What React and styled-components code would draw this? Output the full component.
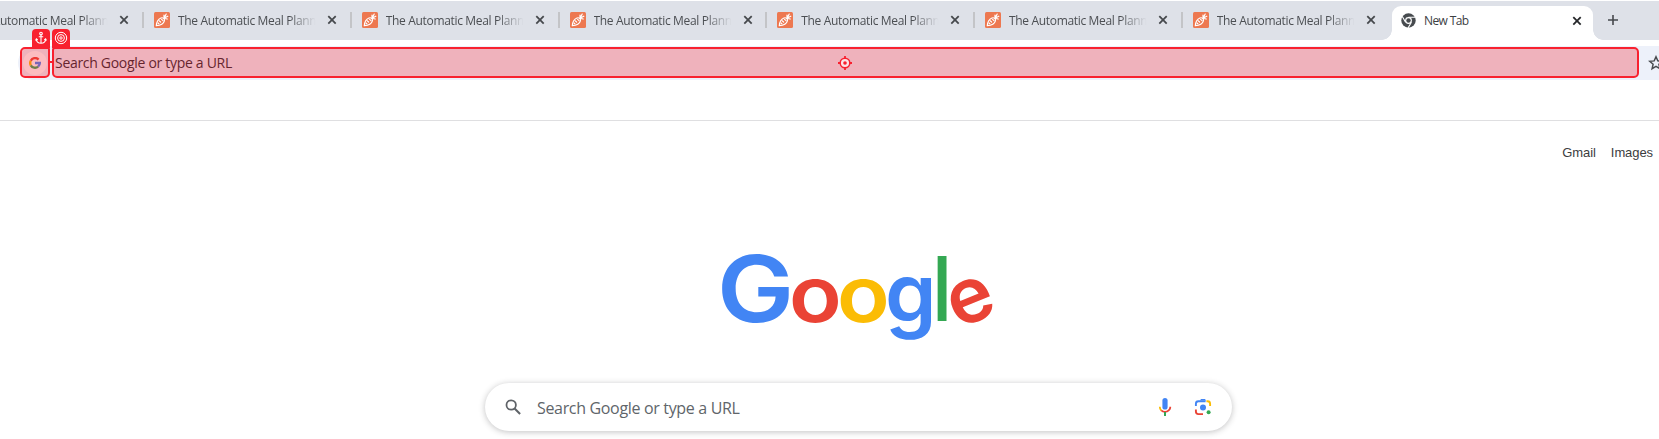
import React from "react";
import styled, { createGlobalStyle } from "styled-components";

const GlobalStyle = createGlobalStyle`
  * { box-sizing: border-box; }
  html, body { margin: 0; overflow: hidden; background: #fff; }
`;

const uiFont = '"Open Sans", "Noto Sans", sans-serif';
const red = "#f8212f";

const Page = styled.div`
  width: 1659px;
  height: 439px;
  overflow: hidden;
  background: #fff;
  font-family: ${uiFont};
`;

const TabStrip = styled.div`
  display: flex;
  height: 39px;
  margin-top: 1px;
  background: #dee1e8;
`;

const InactiveTabs = styled.div`
  display: flex;
  flex: none;
  width: 1392px;
  overflow: hidden;
  justify-content: flex-end;
`;

const Tab = styled.div`
  display: flex;
  flex: none;
  align-items: center;
  width: 207.75px;
  height: 38px;
  &:last-child { margin-right: 3.5px; }
`;

const Separator = styled.div`
  width: 2px;
  height: 16px;
  margin-right: 10px;
  background: #c3c4c7;
`;

const TabTitle = styled.div`
  width: ${(p) => p.$width}px;
  margin: 1px 0 0 8px;
  overflow: hidden;
  white-space: nowrap;
  font-size: 12px;
  line-height: 20px;
  letter-spacing: ${(p) => p.$spacing}px;
  color: ${(p) => (p.$active ? "#3c4043" : "#4c4f53")};
  ${(p) => !p.$active && "mask-image: linear-gradient(90deg, #000 80%, transparent 99%);"}
`;

const CloseSvg = styled.svg`
  flex: none;
  margin-left: ${(p) => p.$gap}px;
`;

const ActiveTab = styled.div`
  position: relative;
  display: flex;
  flex: none;
  align-items: center;
  width: 201px;
  height: 34px;
  margin-top: 5px;
  padding: 0 0 5px 9px;
  border-radius: 9px 9px 0 0;
  background: #fff;
  &::before, &::after {
    content: "";
    position: absolute;
    bottom: 0;
    width: 10px;
    height: 10px;
  }
  &::before {
    left: -10px;
    background: radial-gradient(circle at 0 0, transparent 9.5px, #fff 10px);
  }
  &::after {
    right: -10px;
    background: radial-gradient(circle at 100% 0, transparent 9.5px, #fff 10px);
  }
`;

const NewTabButton = styled.div`
  display: flex;
  margin: 14px 0 0 15px;
`;

const Toolbar = styled.div`
  height: 81px;
  padding: 6px 0 0 18px;
  border-bottom: 1px solid #dfdfe1;
`;

const Omnibox = styled.div`
  position: relative;
  display: flex;
  align-items: center;
  height: 34px;
  padding-left: 5px;
  border-radius: 17px 0 0 17px;
  background: #edf1fa;
`;

const SiteBadge = styled.div`
  display: flex;
  align-items: center;
  justify-content: center;
  flex: none;
  width: 24px;
  height: 24px;
  border-radius: 12px;
  background: #fff;
`;

const OmniboxText = styled.div`
  flex: none;
  width: 1593px;
  margin-left: 8px;
  font-size: 14px;
  line-height: 20px;
  letter-spacing: -0.3px;
  color: #27282f;
`;

const StarSvg = styled.svg`
  flex: none;
`;

const Highlight = styled.div`
  position: absolute;
  top: 1px;
  left: ${(p) => p.$left}px;
  width: ${(p) => p.$width}px;
  height: 31px;
  display: flex;
  align-items: center;
  justify-content: center;
  padding-right: ${(p) => (p.$wide ? 1 : 0)}px;
  border: 2px solid ${red};
  border-radius: ${(p) => (p.$wide ? "3px 5px 5px 5px" : "5px 2px 5px 5px")};
  background: rgba(245, 34, 45, 0.3);
`;

const Marker = styled.div`
  position: absolute;
  top: -17px;
  left: ${(p) => p.$left}px;
  display: flex;
  justify-content: center;
  width: 18px;
  height: 19px;
  border-radius: 4px 4px 0 0;
  background: ${red};
`;

const Connector = styled.div`
  position: absolute;
  left: 31px;
  top: 15px;
  width: 4px;
  height: 2px;
  background: ${red};
`;

const TopLinks = styled.nav`
  display: flex;
  justify-content: flex-end;
  gap: 15px;
  padding: 24px 6px 0 0;
  font: 13px/16px "Liberation Sans", Arial, sans-serif;
  letter-spacing: -0.08px;
  color: #3c3d40;
`;

const LogoSvg = styled.svg`
  display: block;
  margin: 74px 0 0 700px;
  font-family: Inter, sans-serif;
`;

const SearchBox = styled.div`
  display: flex;
  align-items: center;
  width: 747px;
  height: 48px;
  margin: 23px 0 0 485px;
  padding: 0 20px;
  border-radius: 24px;
  background: #fff;
  box-shadow: 0 1px 6px rgba(32, 33, 36, 0.28);
`;

const SearchText = styled.div`
  flex: 1;
  margin: 2px 0 0 15px;
  font-size: 16px;
  line-height: 24px;
  letter-spacing: -0.33px;
  color: #60656a;
`;

const ToolSvg = styled.svg`
  margin-left: ${(p) => p.$gap || 0}px;
`;

const Carrot = () => (
  <svg width="16" height="16" viewBox="0 0 16 16">
    <rect width="16" height="16" rx="1.5" fill="#ed7850" />
    <g fill="none" stroke="#fff" strokeWidth="1.2" strokeLinecap="round" strokeLinejoin="round">
      <path d="M2.3 13.7C2.5 10.5 4 7.2 7 6c2-.8 4 .8 3.4 2.9C9.7 11.4 6.2 13.4 2.3 13.7Z" />
      <path d="M10 6.3V3M10.2 6.1l2-4M10.4 6l3.4-1.8M10.5 6.4l2.8.6M5 8.6l1.6 1.4M7.6 7.4L9 8.6M4 11l1 .9" />
    </g>
  </svg>
);

const Close = ({ gap, color }) => (
  <CloseSvg $gap={gap} width="10" height="10" viewBox="0 0 10 10">
    <path d="M1.3 1.2l7.4 7.4M8.7 1.2L1.3 8.6" stroke={color} strokeWidth="1.8" />
  </CloseSvg>
);

const ChromeIcon = () => (
  <svg width="15" height="15" viewBox="0 0 15 15">
    <circle cx="7.5" cy="7.5" r="7.2" fill="#474b4f" />
    <circle cx="7.5" cy="7.5" r="3.4" fill="#fff" />
    <circle cx="7.5" cy="7.5" r="2.2" fill="#474b4f" />
    <path d="M7.5 4.2h6.7M4.6 9.2L1.3 3.4M10.4 9.2L7 15" stroke="#fff" strokeWidth="1.1" />
  </svg>
);

const GoogleMark = () => (
  <svg width="12" height="12" viewBox="0 0 24 24" fill="none" strokeWidth="4.8">
    <path d="M19.1 5.2A9.6 9.6 0 0 0 3.6 7.4" stroke="#ea4335" />
    <path d="M3.6 7.4a9.6 9.6 0 0 0 0 9.2" stroke="#fbbc05" />
    <path d="M3.6 16.6A9.6 9.6 0 0 0 18.2 19.2" stroke="#34a853" />
    <path d="M18.2 19.2a9.6 9.6 0 0 0 3.4-7.2H12" stroke="#4285f4" />
  </svg>
);

const Anchor = () => (
  <svg width="12" height="18" viewBox="0 0 12 18" fill="none" stroke="#fff" strokeWidth="1.1">
    <circle cx="6" cy="4.6" r="1.3" />
    <path d="M6 6v8.2M3.8 7.8h4.4M1.2 10c.2 2.6 2 4.2 4.8 4.2s4.6-1.6 4.8-4.2M.5 11.4l.9-1.6 1.3 1.2M11.5 11.4l-.9-1.6-1.3 1.2" />
  </svg>
);

const Rings = () => (
  <svg width="14" height="18" viewBox="0 0 14 18" fill="none" stroke="#fff">
    <circle cx="7" cy="9" r="5.7" />
    <circle cx="7" cy="9" r="3.4" />
    <circle cx="7" cy="9" r="1.2" />
  </svg>
);

const Crosshair = () => (
  <svg width="14" height="14" viewBox="0 0 14 14">
    <circle cx="7" cy="7" r="4.8" fill="#fbe3e6" stroke={red} strokeWidth="1.5" />
    <circle cx="7" cy="7" r="1.8" fill={red} />
    <path d="M7 0v3M7 11v3M0 7h3M11 7h3" stroke={red} strokeWidth="1.8" />
  </svg>
);

const Logo = () => (
  <LogoSvg width="310" height="125" viewBox="0 0 310 125" role="img" aria-label="Google">
    <g fontWeight="600">
      <text transform="translate(17 86.5) scale(1.12 1)" fontSize="92" fill="#4285f4">G</text>
      <text transform="translate(89 86.5) scale(1.11 1)" fontSize="78" fill="#ea4335">o</text>
      <text transform="translate(137 86.5) scale(1.11 1)" fontSize="78" fill="#fbbc05">o</text>
      <text transform="translate(185 86.5) scale(1.07 1.05)" fontSize="77" fill="#4285f4">g</text>
      <text transform="translate(233 86) scale(.78 1)" fontSize="89" fill="#34a853">l</text>
      <text transform="translate(272 65.5) rotate(-22) translate(-24.2 21)" fontSize="77" fill="#ea4335">e</text>
    </g>
  </LogoSvg>
);

export default function App() {
  return (
    <Page>
      <GlobalStyle />
      <TabStrip>
        <InactiveTabs>
          {Array.from({ length: 7 }, (_, i) => (
            <Tab key={i}>
              <Separator />
              <Carrot />
              <TabTitle $width={139} $spacing={-0.33}>The Automatic Meal Planner</TabTitle>
              <Close gap={10} color="#46494d" />
            </Tab>
          ))}
        </InactiveTabs>
        <ActiveTab>
          <ChromeIcon />
          <TabTitle $active $width={142} $spacing={-0.6}>New Tab</TabTitle>
          <Close gap={6} color="#26282b" />
        </ActiveTab>
        <NewTabButton>
          <svg width="10" height="10" viewBox="0 0 10 10">
            <path d="M5 0v10M0 5h10" stroke="#46494d" strokeWidth="1.6" />
          </svg>
        </NewTabButton>
      </TabStrip>
      <Toolbar>
        <Omnibox>
          <SiteBadge><GoogleMark /></SiteBadge>
          <OmniboxText>Search Google or type a URL</OmniboxText>
          <StarSvg width="16" height="16" viewBox="0 0 16 16">
            <path d="M8 1.8l1.8 4.1 4.5.4-3.4 3 1 4.4L8 11.4l-3.9 2.3 1-4.4-3.4-3 4.5-.4Z" fill="none" stroke="#494c50" strokeWidth="1.5" />
          </StarSvg>
          <Marker $left={14}><Anchor /></Marker>
          <Marker $left={34}><Rings /></Marker>
          <Connector />
          <Highlight $left={2} $width={30} />
          <Highlight $wide $left={34} $width={1587}><Crosshair /></Highlight>
        </Omnibox>
      </Toolbar>
      <TopLinks>
        <span>Gmail</span>
        <span>Images</span>
      </TopLinks>
      <Logo />
      <SearchBox>
        <svg width="17" height="17" viewBox="0 0 17 17" fill="none" stroke="#5f6368">
          <circle cx="6.2" cy="6" r="4.7" strokeWidth="1.8" />
          <path d="M9.6 9.4l5.5 5.5" strokeWidth="2.1" />
        </svg>
        <SearchText>Search Google or type a URL</SearchText>
        <ToolSvg width="14" height="20" viewBox="0 0 14 20" fill="none">
          <rect x="4.4" y="1" width="5.2" height="11.5" rx="2.6" fill="#4285f4" />
          <path d="M1.8 9.8c0 1.6.5 2.8 1.5 3.8" stroke="#fbbc04" strokeWidth="1.8" />
          <path d="M3.3 13.4c2 2 5.4 2 7.4 0s1.5-2.2 1.5-3.6" stroke="#ea4335" strokeWidth="1.8" />
          <path d="M7 15v4" stroke="#34a853" strokeWidth="2" />
        </ToolSvg>
        <ToolSvg $gap={22} width="18" height="18" viewBox="0 0 18 18" fill="none">
          <path d="M1.9 8V5.8a2.5 2.5 0 0 1 2.5-2.5h7.2" stroke="#4285f4" strokeWidth="1.9" />
          <path d="M6 2.6L7 1h4l1 1.6Z" fill="#4285f4" />
          <path d="M12.4 3.3h1.2a2.5 2.5 0 0 1 2.5 2.5V8" stroke="#fbbc04" strokeWidth="1.9" />
          <path d="M1.9 11.4v2.2a2.5 2.5 0 0 0 2.5 2.5H9" stroke="#ea4335" strokeWidth="1.9" />
          <circle cx="9" cy="9.6" r="3" fill="#4285f4" />
          <circle cx="14.6" cy="14.2" r="2" fill="#34a853" />
        </ToolSvg>
      </SearchBox>
    </Page>
  );
}
